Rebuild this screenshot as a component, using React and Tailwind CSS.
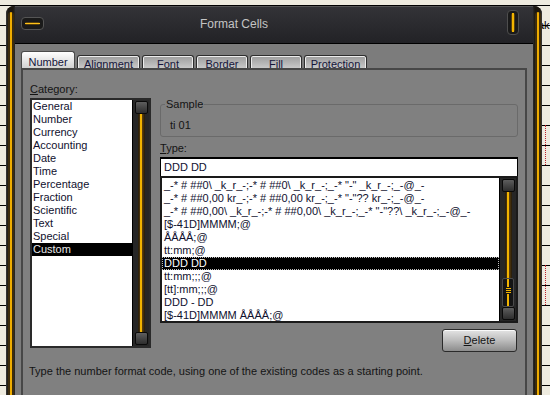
import React from 'react'

const categories = ['General', 'Number', 'Currency', 'Accounting', 'Date', 'Time', 'Percentage', 'Fraction', 'Scientific', 'Text', 'Special', 'Custom']

const formats = [
  '_-* # ##0\\ _k_r_-;-* # ##0\\ _k_r_-;_-* "-" _k_r_-;_-@_-',
  '_-* # ##0,00 kr_-;-* # ##0,00 kr_-;_-* "-"?? kr_-;_-@_-',
  '_-* # ##0,00\\ _k_r_-;-* # ##0,00\\ _k_r_-;_-* "-"??\\ _k_r_-;_-@_-',
  '[$-41D]MMMM;@',
  'ÅÅÅÅ;@',
  'tt:mm;@',
  'DDD DD',
  'tt:mm;;;@',
  '[tt]:mm;;;@',
  'DDD - DD',
  '[$-41D]MMMM ÅÅÅÅ;@',
]

const tabs = [
  { label: 'Number', w: 'w-[54px]', active: true },
  { label: 'Alignment', w: 'w-[63px]' },
  { label: 'Font', w: 'w-[52px]' },
  { label: 'Border', w: 'w-[52px]' },
  { label: 'Fill', w: 'w-[52px]' },
  { label: 'Protection', w: 'w-[63px]' },
]

function Thumb() {
  return <div className="w-[13px] h-[13px] shrink-0 rounded-[2px] border border-[#0a0a0a] bg-gradient-to-b from-[#5e5e5e] to-[#2e2e2e]" />
}

function Track() {
  return (
    <div className="flex-1 w-[7px] flex justify-center bg-[linear-gradient(to_right,#231a0a,#6e4c12,#231a0a)]">
      <div className="w-[2px] bg-[#f2b400]" />
    </div>
  )
}

// scrollbar of the skinned list boxes
function Scroll({ mid }) {
  return (
    <div className="w-[17px] shrink-0 flex flex-col items-center bg-[#262626] border-l border-black py-[1px]">
      <Thumb />
      <Track />
      {mid && (
        <div className="w-[12px] h-[29px] shrink-0 flex flex-col items-center rounded-[2px] border border-[#4a4a4a] bg-[#141414]">
          <div className="w-[2px] h-[8px] bg-[#f2b400]" />
          <div className="flex flex-col gap-[1px] my-[1px]">
            <div className="w-[5px] h-[1px] bg-[#f2b400]" />
            <div className="w-[5px] h-[1px] bg-[#f2b400]" />
            <div className="w-[5px] h-[1px] bg-[#f2b400]" />
          </div>
          <div className="flex-1 w-[2px] bg-[#f2b400]" />
        </div>
      )}
      <Thumb />
    </div>
  )
}

export default function App() {
  return (
    <div className="w-[550px] h-[395px] overflow-hidden flex bg-[#eeebdf] bg-[repeating-linear-gradient(to_bottom,transparent_0px,transparent_5px,#000_5px,#000_6px,transparent_6px,transparent_20px)] text-[11px] text-[#141414] font-['Liberation_Sans',Arial,sans-serif]">
      <div className="w-[6px] shrink-0" />

      {/* window */}
      <div className="w-[536px] shrink-0 pt-[6px] flex flex-col">
        <div className="flex-1 flex rounded-t-[8px] overflow-hidden bg-[#151515]">
          {/* left frame */}
          <div className="w-[9px] shrink-0 flex justify-center pt-[6px] bg-[linear-gradient(to_right,#3c3c3c_0px,#1b1710_2px,#1b1710_7px,#2a2a2a)]">
            <div className="w-[6px] flex justify-center rounded-t-full bg-[#3d2c0c]">
              <div className="w-[2px] rounded-t-full bg-[#efad00]" />
            </div>
          </div>

          {/* centre */}
          <div className="w-[518px] shrink-0 flex flex-col">
            <div className="h-[38px] shrink-0 flex items-start border-b border-black bg-gradient-to-b from-[#343438] to-[#222226] shadow-[inset_0_1px_0_#555] pl-[6px]">
              <div className="mt-[11px] w-[23px] h-[13px] flex items-center justify-center rounded-[4px] border border-[#555] bg-[#1a1a1a]">
                <div className="w-[15px] h-[3px] flex items-center rounded-full bg-[#5a420c]">
                  <div className="w-full h-[1px] bg-[#ffc21a]" />
                </div>
              </div>
              <div className="mt-[11px] ml-[156px] leading-[14px] text-[12px] text-[#c4c4c4]">Format Cells</div>
              <div className="ml-auto mr-[14px] mt-[4px] w-[12px] h-[25px] flex justify-center items-center rounded-[4px] border border-[#4e4e4e] bg-[#1a1a1a]">
                <div className="w-[4px] h-[19px] flex justify-center rounded-full bg-[#5a420c]">
                  <div className="w-[2px] h-full bg-[#f2b400]" />
                </div>
              </div>
            </div>

            <div className="flex-1 flex flex-col bg-[#7c7c7c] px-[6px] pt-[7px]">
              {/* tabs */}
              <div className="h-[17px] shrink-0 flex items-end gap-[2px]">
                {tabs.map((t) =>
                  t.active ? (
                    <div key={t.label} className={`${t.w} h-[17px] overflow-hidden text-center pt-[3px] leading-[14px] text-[#14143a] rounded-t-[3px] border border-b-0 border-[#4a4a4a] bg-gradient-to-b from-white to-[#d2d2d2]`}>
                      {t.label}
                    </div>
                  ) : (
                    <div key={t.label} className={`${t.w} h-[13px] overflow-hidden text-center pt-[1px] leading-[14px] text-[#14143a] rounded-t-[3px] border border-b-0 border-[#2e2e2e] shadow-[inset_0_1px_0_#ececec,inset_1px_0_0_#ececec,inset_-1px_0_0_#ececec] bg-gradient-to-b from-[#9c9c9c] to-[#c8c8c8]`}>
                      {t.label}
                    </div>
                  )
                )}
              </div>

              {/* panel */}
              <div className="flex-1 flex flex-col border-2 border-b-0 border-[#474747] bg-[#808080] px-[7px] pt-[12px]">
                <div className="flex gap-[9px]">
                  <div className="w-[121px] shrink-0 flex flex-col">
                    <div className="h-[14px] leading-[14px]"><span className="underline">C</span>ategory:</div>
                    <div className="mt-[2px] h-[250px] flex border-2 border-[#2a2a2a] bg-white">
                      <div className="flex-1 flex flex-col">
                        {categories.map((c) => (
                          <div key={c} className={`h-[13px] leading-[13px] pl-[1px] ${c === 'Custom' ? 'bg-black text-[#e8e8e8]' : 'text-[#10102e]'}`}>{c}</div>
                        ))}
                      </div>
                      <Scroll />
                    </div>
                  </div>

                  <div className="w-[358px] shrink-0 flex flex-col mt-[15px]">
                    <fieldset className="rounded-[3px] border border-[#6a6a6a] pl-[9px] pb-[4px]">
                      <legend className="ml-[-5px] px-[1px] leading-[14px]">Sample</legend>
                      <div className="mt-[7px] h-[14px] leading-[14px]">ti 01</div>
                    </fieldset>
                    <div className="mt-[4px] h-[14px] leading-[14px]"><span className="underline">T</span>ype:</div>
                    <div className="mt-[2px] h-[19px] border border-t-2 border-b-0 border-black bg-white pl-[3px] leading-[17px] text-[#10102e]">DDD DD</div>
                    <div className="h-[147px] flex border-2 border-[#1a1a1a] bg-white">
                      <div className="flex-1 min-w-0 overflow-hidden pt-[1px] flex flex-col">
                        {formats.map((f, i) => (
                          <div key={i} className={`h-[13px] shrink-0 leading-[11px] pl-[1px] whitespace-pre ${i === 6 ? 'bg-black text-white border border-dotted border-[#bdbdbd]' : 'text-[#10102e] border border-transparent'}`}>{f}</div>
                        ))}
                      </div>
                      <Scroll mid />
                    </div>
                    <div className="mt-[6px] flex justify-end pr-[1px]">
                      <div className="w-[75px] h-[23px] flex items-center justify-center rounded-[3px] border border-[#2a2a2a] bg-gradient-to-b from-[#e4e4e4] via-[#bcbcbc] to-[#8c8c8c] shadow-[inset_0_1px_0_#fafafa] text-[#141414]">
                        <span><span className="underline">D</span>elete</span>
                      </div>
                    </div>
                  </div>
                </div>
                <div className="mt-[12px] -ml-[1px] h-[14px] leading-[14px]">Type the number format code, using one of the existing codes as a starting point.</div>
              </div>
            </div>
          </div>

          {/* right frame */}
          <div className="w-[9px] shrink-0 flex justify-center pt-[6px] bg-[linear-gradient(to_right,#2a2a2a,#1b1710_2px,#1b1710_7px,#3c3c3c)]">
            <div className="w-[6px] flex justify-center rounded-t-full bg-[#3d2c0c]">
              <div className="w-[2px] rounded-t-full bg-[#efad00]" />
            </div>
          </div>
        </div>
      </div>

      {/* sheet behind the dialog */}
      <div className="w-[8px] shrink-0 overflow-hidden flex flex-col">
        <div className="mt-[19px] -ml-[4px] leading-[12px] text-black">ak</div>
        <div className="mt-[94px] ml-[3px] h-[40px] border-l border-dotted border-[#c0202a]" />
        <div className="mt-[100px] ml-[3px] h-[40px] border-l border-dotted border-[#c0202a]" />
      </div>
    </div>
  )
}
